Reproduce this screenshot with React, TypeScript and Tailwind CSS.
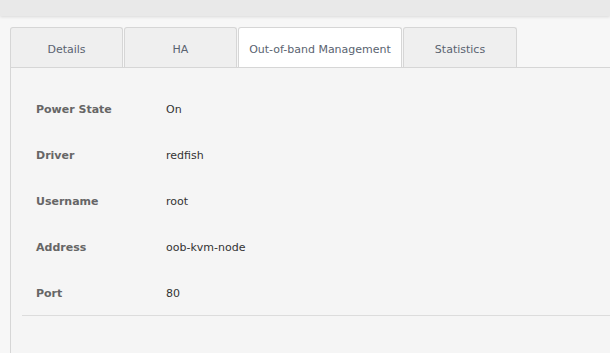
const tabs = [
  { label: 'Details', width: 'w-[113px]' },
  { label: 'HA', width: 'w-[113px]' },
  { label: 'Out-of-band Management', width: 'w-[164px]', active: true },
  { label: 'Statistics', width: 'w-[114px]' },
];

const rows = [
  { label: 'Power State', value: 'On' },
  { label: 'Driver', value: 'redfish' },
  { label: 'Username', value: 'root' },
  { label: 'Address', value: 'oob-kvm-node' },
  { label: 'Port', value: '80' },
];

export default function App() {
  return (
    <div className="h-[353px] w-[610px] overflow-hidden bg-[#f7f7f7] font-['DejaVu_Sans',sans-serif] text-[11px]">
      <div className="h-[16px] bg-[#e9e9e9] shadow-[0_1px_3px_rgba(0,0,0,0.12)]" />

      <div className="pl-[10px] pt-[11px]">
        <div className="flex gap-[1px]">
          {tabs.map((tab) => (
            <div
              key={tab.label}
              className={`${tab.width} flex h-[40px] items-center justify-center rounded-t-[3px] border border-b-0 border-[#d6d6d6] pt-[5px] text-[#5a6370] ${
                tab.active ? 'bg-white' : 'bg-[#efefef]'
              }`}
            >
              {tab.label}
            </div>
          ))}
        </div>

        <div className="h-[300px] border-l border-t border-[#d6d6d6] bg-[#f5f5f5] pl-[11px] pt-[17px]">
          <div className="border-b border-[#dcdcdc]">
            {rows.map((row) => (
              <div key={row.label} className="flex h-[46px] items-center pl-[14px] pt-[4px]">
                <span className="w-[130px] font-bold text-[#666]">{row.label}</span>
                <span className="text-[#333]">{row.value}</span>
              </div>
            ))}
          </div>
        </div>
      </div>
    </div>
  );
}
